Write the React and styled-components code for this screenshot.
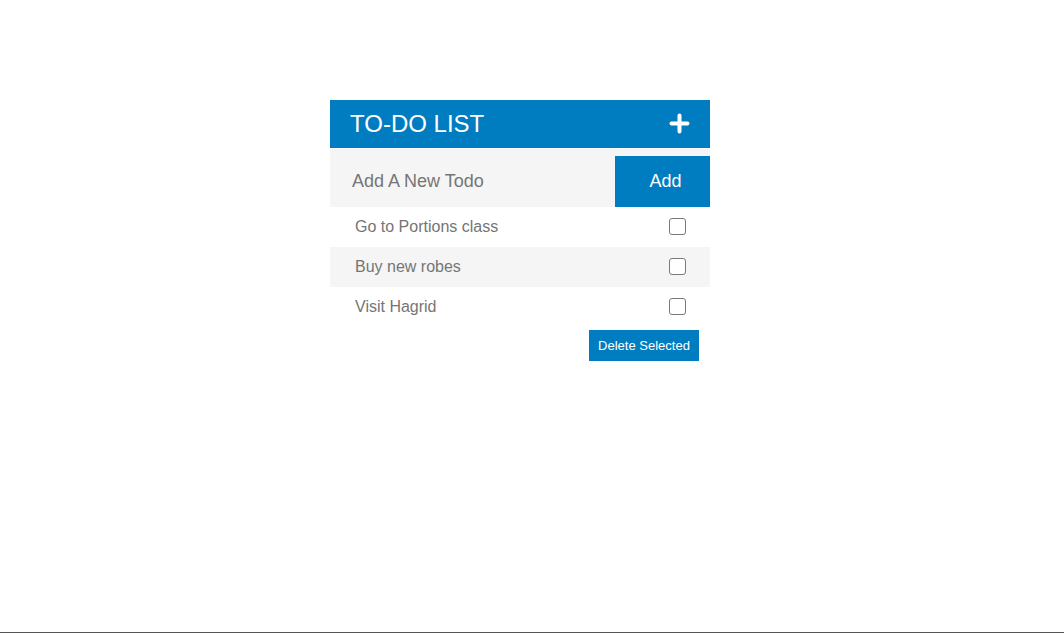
import React, { useState } from "react";
import styled, { createGlobalStyle } from "styled-components";

const Global = createGlobalStyle`
  html, body { margin: 0; padding: 0; background: #fff; }
  body { font-family: "Liberation Sans", Arial, Helvetica, sans-serif; }
  * { box-sizing: border-box; }
`;

const Page = styled.div`
  height: 633px;
  border-bottom: 1px solid #555;
  padding-top: 100px;
  padding-left: 330px;
`;

const Card = styled.div`
  width: 380px;
  display: flex;
  flex-direction: column;
`;

const Header = styled.div`
  height: 48px;
  background: #007dc1;
  display: flex;
  align-items: center;
  justify-content: space-between;
  padding: 0 20px 0 20px;
`;

const Title = styled.h1`
  margin: 0;
  font-size: 24px;
  font-weight: 400;
  color: #fff;
  line-height: 1;
`;

const PlusButton = styled.button`
  border: 0;
  background: transparent;
  padding: 0;
  width: 21px;
  height: 21px;
  display: flex;
  cursor: pointer;
  margin-bottom: 2px;
`;

const InputRow = styled.form`
  margin: 1px 0 0;
  height: 58px;
  background: #f5f5f5;
  display: flex;
  align-items: flex-end;
`;

const TodoInput = styled.input`
  flex: 1;
  height: 51px;
  border: 0;
  background: transparent;
  padding: 0 0 0 22px;
  font-family: inherit;
  font-size: 18px;
  color: #555;
  outline: none;
  &::placeholder { color: #757575; }
`;

const AddButton = styled.button`
  width: 95px;
  height: 51px;
  border: 0;
  background: #007dc1;
  color: #fff;
  font-family: inherit;
  font-size: 18px;
  padding: 0 0 0 6px;
  cursor: pointer;
`;

const List = styled.ul`
  list-style: none;
  margin: 0;
  padding: 0;
`;

const Item = styled.li`
  height: 40px;
  display: flex;
  align-items: center;
  justify-content: space-between;
  padding: 0 24px 0 25px;
  background: ${(p) => (p.$alt ? "#f5f5f5" : "#fff")};
  font-size: 16px;
  color: #757575;
`;

const Check = styled.span`
  width: 17px;
  height: 17px;
  border: 1.5px solid #7a7a7a;
  border-radius: 3px;
  background: #fff;
  display: inline-block;
  cursor: pointer;
  margin-top: -2px;
`;

const Footer = styled.div`
  display: flex;
  justify-content: flex-end;
  padding: 3px 11px 0 0;
`;

const DeleteButton = styled.button`
  height: 31px;
  width: 110px;
  border: 0;
  background: #007dc1;
  color: #fff;
  font-family: inherit;
  font-size: 13px;
  padding: 0;
  cursor: pointer;
`;

const todos = ["Go to Portions class", "Buy new robes", "Visit Hagrid"];

export default function App() {
  const [value, setValue] = useState("");
  return (
    <>
      <Global />
      <Page>
        <Card>
          <Header>
            <Title>TO-DO LIST</Title>
            <PlusButton aria-label="add">
              <svg width="21" height="21" viewBox="0 0 21 21">
                <path d="M10.5 2.5v16M2.5 10.5h16" stroke="#fff" strokeWidth="4" strokeLinecap="round" />
              </svg>
            </PlusButton>
          </Header>
          <InputRow onSubmit={(e) => e.preventDefault()}>
            <TodoInput
              placeholder="Add A New Todo"
              value={value}
              onChange={(e) => setValue(e.target.value)}
            />
            <AddButton type="submit">Add</AddButton>
          </InputRow>
          <List>
            {todos.map((t, i) => (
              <Item key={t} $alt={i % 2 === 1}>
                <span>{t}</span>
                <Check />
              </Item>
            ))}
          </List>
          <Footer>
            <DeleteButton>Delete Selected</DeleteButton>
          </Footer>
        </Card>
      </Page>
    </>
  );
}
